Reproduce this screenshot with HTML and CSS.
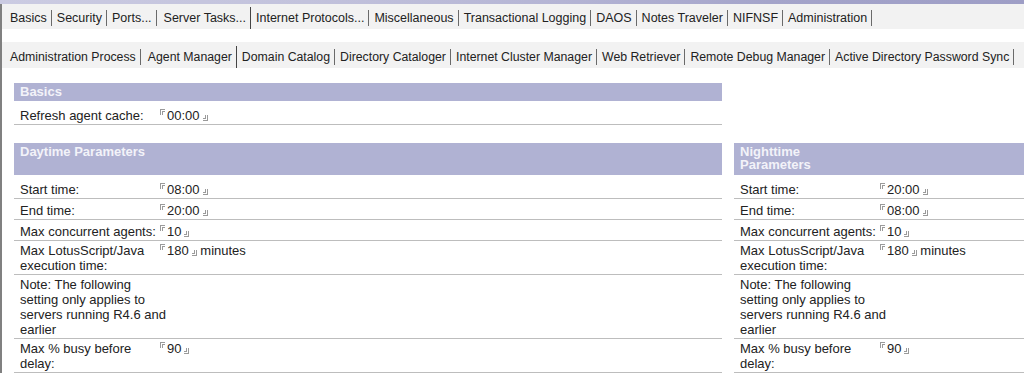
FILE: index.html
```html
<!DOCTYPE html>
<html lang="en">
<head>
    <meta charset="UTF-8">
    <meta name="viewport" content="width=device-width, initial-scale=1.0">
    <title>Server Tasks - Agent Manager</title>
    <link rel="stylesheet" href="styles.css">
</head>
<body>
    <div class="banner"></div>
    <div class="window">
        <div class="tabs">
            <span class="tab">Basics</span>
            <span class="tab">Security</span>
            <span class="tab">Ports...</span>
            <span class="tab active">Server Tasks...</span>
            <span class="tab">Internet Protocols...</span>
            <span class="tab">Miscellaneous</span>
            <span class="tab">Transactional Logging</span>
            <span class="tab">DAOS</span>
            <span class="tab">Notes Traveler</span>
            <span class="tab">NIFNSF</span>
            <span class="tab">Administration</span>
        </div>
        <div class="tabs tabs-sub">
            <span class="tab">Administration Process</span>
            <span class="tab active">Agent Manager</span>
            <span class="tab">Domain Catalog</span>
            <span class="tab">Directory Cataloger</span>
            <span class="tab">Internet Cluster Manager</span>
            <span class="tab">Web Retriever</span>
            <span class="tab">Remote Debug Manager</span>
            <span class="tab">Active Directory Password Sync</span>
        </div>

        <div class="content">
            <div class="panel basics">
                <div class="heading">Basics</div>
                <div class="row first">
                    <div class="label">Refresh agent cache:</div>
                    <div class="value"><span class="field">00:00</span></div>
                </div>
            </div>

            <div class="columns">
                <div class="panel day">
                    <div class="heading">Daytime Parameters</div>
                    <div class="row first">
                        <div class="label">Start time:</div>
                        <div class="value"><span class="field">08:00</span></div>
                    </div>
                    <div class="row">
                        <div class="label">End time:</div>
                        <div class="value"><span class="field">20:00</span></div>
                    </div>
                    <div class="row">
                        <div class="label">Max concurrent agents:</div>
                        <div class="value"><span class="field">10</span></div>
                    </div>
                    <div class="row wrap">
                        <div class="label">Max LotusScript/Java execution time:</div>
                        <div class="value"><span class="field">180</span> minutes</div>
                    </div>
                    <div class="row wrap">
                        <div class="label">Note: The following setting only applies to servers running R4.6 and earlier</div>
                        <div class="value"></div>
                    </div>
                    <div class="row wrap">
                        <div class="label">Max % busy before delay:</div>
                        <div class="value"><span class="field">90</span></div>
                    </div>
                </div>

                <div class="panel night">
                    <div class="heading">Nighttime<br>Parameters</div>
                    <div class="row first">
                        <div class="label">Start time:</div>
                        <div class="value"><span class="field">20:00</span></div>
                    </div>
                    <div class="row">
                        <div class="label">End time:</div>
                        <div class="value"><span class="field">08:00</span></div>
                    </div>
                    <div class="row">
                        <div class="label">Max concurrent agents:</div>
                        <div class="value"><span class="field">10</span></div>
                    </div>
                    <div class="row wrap">
                        <div class="label">Max LotusScript/Java execution time:</div>
                        <div class="value"><span class="field">180</span> minutes</div>
                    </div>
                    <div class="row wrap">
                        <div class="label">Note: The following setting only applies to servers running R4.6 and earlier</div>
                        <div class="value"></div>
                    </div>
                    <div class="row wrap">
                        <div class="label">Max % busy before delay:</div>
                        <div class="value"><span class="field">90</span></div>
                    </div>
                </div>
            </div>
        </div>
    </div>
</body>
</html>
```

FILE: styles.css
```css
body {
    margin: 0;
    font-family: "Liberation Sans", Arial, sans-serif;
    font-size: 13px;
    color: #222;
    background-color: #fff;
    overflow: hidden;
}

.banner {
    height: 4px;
    background: linear-gradient(90deg, #cbcbe2 0%, #c2c2dc 30%, #b4b4d4 55%, #a4a4ca 75%, #9e9ec6 100%);
}

.window {
    border-left: 2px solid #808080;
    min-height: 369px;
}

.tabs {
    display: flex;
    align-items: center;
    height: 25px;
    padding: 3px 0 0 3px;
    box-sizing: border-box;
    background-color: #f2f2f2;
    font-size: 12.5px;
    white-space: nowrap;
}

.tabs-sub {
    margin-top: 13px;
    height: 26px;
    padding-top: 4px;
    font-size: 12.3px;
}

.tab {
    line-height: 16px;
    padding: 0 4px 0 5px;
    border-right: 1px solid #6a6a6a;
}

.tab.active {
    align-self: stretch;
    display: flex;
    align-items: center;
    padding: 0 4px 0 7px;
    border-right-color: #444;
}

.content {
    padding: 15px 0 0 12px;
}

.basics {
    width: 708px;
}

.heading {
    background-color: #b0b2d3;
    color: #f3f3f9;
    font-weight: bold;
    line-height: 13px;
    padding: 2px 6px 3px;
}

.columns {
    display: flex;
    gap: 12px;
    margin-top: 18px;
}

.columns .heading {
    height: 26px;
    padding-bottom: 4px;
}

.day {
    width: 708px;
    flex: none;
}

.night {
    flex: 1;
}

.row {
    display: flex;
    line-height: 15px;
    padding: 4px 0 1px;
    border-bottom: 1px solid #bdbdbd;
}

.row.first {
    padding-top: 7px;
}

.row.wrap {
    padding-top: 2px;
}

.label {
    width: 148px;
    padding-left: 6px;
    margin-right: -8px;
    flex: none;
}

.value {
    flex: 1;
    white-space: nowrap;
}

.field::before,
.field::after {
    content: "";
    display: inline-block;
    width: 2px;
    height: 3px;
}

.field::before {
    border-top: 3px double #9a9a9a;
    border-left: 3px double #9a9a9a;
    margin-right: 2px;
    vertical-align: 5px;
}

.field::after {
    border-bottom: 3px double #9a9a9a;
    border-right: 3px double #9a9a9a;
    margin-left: 3px;
    vertical-align: -1px;
}
```
